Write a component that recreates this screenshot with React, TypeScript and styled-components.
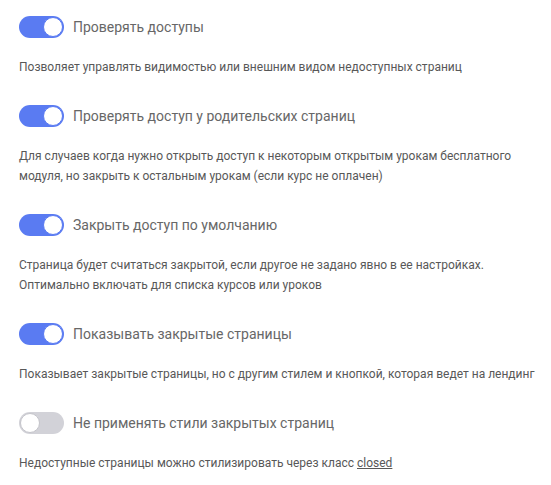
import styled, { createGlobalStyle } from "styled-components";

const GlobalStyle = createGlobalStyle`
  html, body {
    margin: 0;
    padding: 0;
    background: #ffffff;
  }
  body {
    font-family: Roboto, "Liberation Sans", sans-serif;
  }
`;

const Page = styled.div`
  display: flex;
  flex-direction: column;
  padding: 16px 0 0 19px;
`;

const Section = styled.div`
  display: flex;
  flex-direction: column;
  margin-bottom: 28px;
`;

const Row = styled.label`
  display: flex;
  align-items: center;
  gap: 9px;
  height: 22px;
`;

const Track = styled.span<{ $on: boolean }>`
  position: relative;
  display: inline-block;
  width: 45px;
  height: 22px;
  border-radius: 11px;
  background: ${(p) => (p.$on ? "#5a7bf2" : "#d2d2d8")};
  flex-shrink: 0;
`;

const Knob = styled.span<{ $on: boolean }>`
  position: absolute;
  top: 1px;
  left: ${(p) => (p.$on ? "24px" : "1px")};
  width: 20px;
  height: 20px;
  box-sizing: border-box;
  border-radius: 50%;
  background: #ffffff;
  border: 1px solid ${(p) => (p.$on ? "#5a7bf2" : "#c4c4ca")};
`;

const Title = styled.span`
  font-size: 14px;
  color: #676767;
  line-height: 22px;
  white-space: nowrap;
`;

const Description = styled.p`
  margin: 19px 0 0;
  font-size: 12px;
  line-height: 20px;
  color: #585858;
  white-space: nowrap;
`;

const Code = styled.span`
  text-decoration: underline;
`;

interface Option {
  title: string;
  on: boolean;
  text: React.ReactNode;
}

const options: Option[] = [
  {
    title: "Проверять доступы",
    on: true,
    text: "Позволяет управлять видимостью или внешним видом недоступных страниц",
  },
  {
    title: "Проверять доступ у родительских страниц",
    on: true,
    text: (
      <>
        Для случаев когда нужно открыть доступ к некоторым открытым урокам бесплатного
        <br />
        модуля, но закрыть к остальным урокам (если курс не оплачен)
      </>
    ),
  },
  {
    title: "Закрыть доступ по умолчанию",
    on: true,
    text: (
      <>
        Страница будет считаться закрытой, если другое не задано явно в ее настройках.
        <br />
        Оптимально включать для списка курсов или уроков
      </>
    ),
  },
  {
    title: "Показывать закрытые страницы",
    on: true,
    text: "Показывает закрытые страницы, но с другим стилем и кнопкой, которая ведет на лендинг",
  },
  {
    title: "Не применять стили закрытых страниц",
    on: false,
    text: (
      <>
        Недоступные страницы можно стилизировать через класс <Code>closed</Code>
      </>
    ),
  },
];

const App = () => {
  return (
    <>
      <GlobalStyle />
      <Page>
        {options.map((o) => (
          <Section key={o.title}>
            <Row>
              <Track $on={o.on}>
                <Knob $on={o.on} />
              </Track>
              <Title>{o.title}</Title>
            </Row>
            <Description>{o.text}</Description>
          </Section>
        ))}
      </Page>
    </>
  );
};

export default App;
